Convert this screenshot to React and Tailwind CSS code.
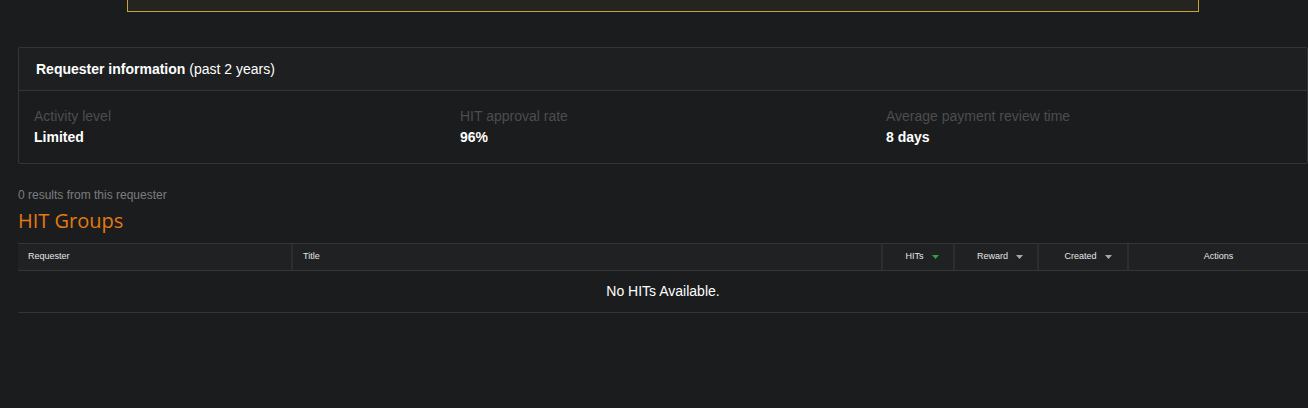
const stats = [
  { label: 'Activity level', value: 'Limited' },
  { label: 'HIT approval rate', value: '96%' },
  { label: 'Average payment review time', value: '8 days' },
];

const Caret = ({ color }) => (
  <svg width="7" height="4" viewBox="0 0 7 4" className="shrink-0">
    <path d="M0 0 L7 0 L3.5 4 Z" fill={color} />
  </svg>
);

const App = () => {
  return (
    <div
      className="min-h-[408px] bg-[#1b1c1e] text-white overflow-hidden"
      style={{ fontFamily: '"Liberation Sans", Arial, sans-serif' }}
    >
      {/* alert box cut off at top */}
      <div className="ml-[127px] w-[1072px] h-[12px] bg-[#25251f] border-x border-b border-[#c8a23c]" />

      <div className="ml-[18px] mt-[35px] w-[1290px] border border-[#343538] rounded-[2px]">
        <div className="h-[43px] flex items-center pl-[17px] bg-[#1e1f21] border-b border-[#343538] text-[14px]">
          <span className="font-bold">Requester information</span>
          <span className="ml-[4px]">(past 2 years)</span>
        </div>
        <div className="flex pl-[15px] pt-[15px] pb-[15px] overflow-hidden">
          {stats.map((s) => (
            <div key={s.label} className="w-[426px] shrink-0">
              <div className="text-[14px] leading-[20px] text-[#4c4d4f]">{s.label}</div>
              <div className="text-[14px] leading-[22px] font-bold text-white">{s.value}</div>
            </div>
          ))}
        </div>
      </div>

      <div className="ml-[18px] mt-[23px] text-[12px] leading-[16px] text-[#7b7c7e]">
        0 results from this requester
      </div>
      <h2
        className="ml-[18px] mt-[4px] text-[20px] leading-[28px] text-[#e47911]"
        style={{ fontFamily: '"Open Sans", sans-serif' }}
      >
        HIT Groups
      </h2>

      <div className="ml-[18px] mt-[8px] w-[1290px]">
        <div className="flex h-[28px] bg-[#202123] border-y border-[#343538] text-[9px] text-[#e6e6e6]">
          <div className="w-[275px] flex items-center pl-[10px] border-r-2 border-[#2c2d2f]">Requester</div>
          <div className="w-[590px] flex items-center pl-[10px] border-r-2 border-[#2c2d2f]">Title</div>
          <div className="w-[72px] flex items-center justify-center gap-[8px] pl-[8px] border-r-2 border-[#2c2d2f]">
            HITs <Caret color="#2ea043" />
          </div>
          <div className="w-[84px] flex items-center justify-center gap-[8px] pl-[8px] border-r-2 border-[#2c2d2f]">
            Reward <Caret color="#a7a8aa" />
          </div>
          <div className="w-[90px] flex items-center justify-center gap-[8px] pl-[10px] border-r-2 border-[#2c2d2f]">
            Created <Caret color="#a7a8aa" />
          </div>
          <div className="flex-1 flex items-center justify-center">Actions</div>
        </div>
        <div className="h-[42px] flex items-center justify-center border-b border-[#343538] text-[14px] text-white">
          No HITs Available.
        </div>
      </div>
    </div>
  );
};

export default App;
